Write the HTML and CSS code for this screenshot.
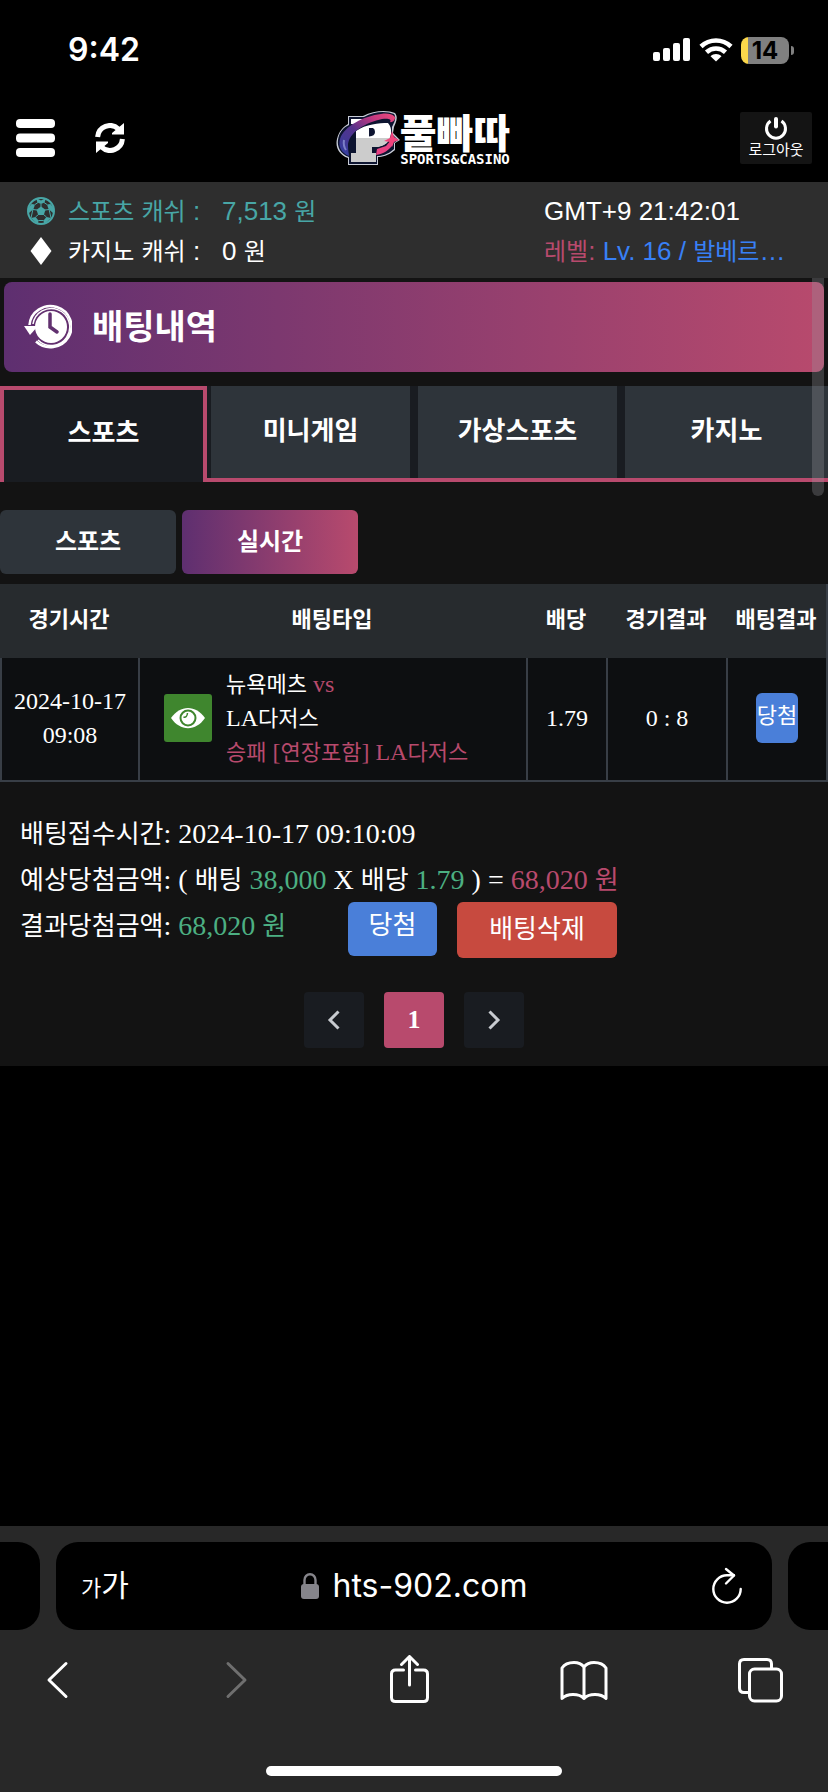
FILE: index.html
```html
<!DOCTYPE html>
<html lang="ko">
<head>
<meta charset="utf-8">
<meta name="viewport" content="width=device-width, initial-scale=1">
<title>배팅내역</title>
<link rel="stylesheet" href="styles.css">
</head>
<body>
<div class="screen">
  <div class="status">
    <time class="clock">9:42</time>
    <div class="status-icons">
      <svg width="38" height="24" viewBox="0 0 38 24" fill="#fff"><rect x="0" y="14" width="7" height="9" rx="2"/><rect x="10" y="10" width="7" height="13" rx="2"/><rect x="20" y="5" width="7" height="18" rx="2"/><rect x="30" y="0" width="7" height="23" rx="2"/></svg>
      <svg width="34" height="24" viewBox="0 0 34 24" fill="none" stroke="#fff" stroke-width="4.600"><path d="M2 8.500C10.500 .5 23.500 .5 32 8.500"/><path d="M7.500 14.200C13 9.200 21 9.200 26.500 14.200"/><path d="M17 23.500L11.500 18.200C14.500 15.400 19.500 15.400 22.500 18.200Z" fill="#fff" stroke="none"/></svg>
      <div class="battery"><span>14</span></div>
    </div>
  </div>

  <header class="header">
    <div class="header-left">
      <button class="icon-btn" aria-label="메뉴"><svg width="39" height="38" viewBox="0 0 39 38" fill="#fff"><rect width="39" height="9" rx="4"/><rect y="14.500" width="39" height="9" rx="4"/><rect y="29" width="39" height="9" rx="4"/></svg></button>
      <button class="icon-btn" aria-label="새로고침"><svg width="30" height="30" viewBox="0 0 30 30"><g fill="none" stroke="#fff" stroke-width="5"><path d="M2.600 14A12.400 12.400 0 0 1 23.500 6"/><path d="M27.400 16A12.400 12.400 0 0 1 6.500 24"/></g><path fill="#fff" d="M29 0V11.500H17V10zM1 30V18.500H13V20z"/></svg></button>
    </div>
    <a class="logo" href="#">
      <svg width="64" height="56" viewBox="0 0 64 56">
        <defs><linearGradient id="ring" x1="0" y1="1" x2="1" y2="0"><stop offset="0" stop-color="#2f3fa0"/><stop offset=".45" stop-color="#55338c"/><stop offset=".75" stop-color="#c43880"/><stop offset="1" stop-color="#f04c7c"/></linearGradient></defs>
        <path fill="#c8ccd6" d="M12 5H27C38-1 52-1 59 2C63 7 59 13 58 16L57 22L64 29L59 32V39C52 45 46 46 42 46V54H12V47C3 44-1 36 1 28C3 20 7 16 12 13Z"/>
        <path fill="#0d1430" d="M13 6H28C38 0 51 0 58 3C61 7 58 12 56 16L56 23L62 29L58 32V38C51 44 46 45 41 45V53H13V46C4 43 1 35 2 29C3 21 8 16 13 14Z"/>
        <path fill="#fff" d="M15 8H27L20 13H15ZM20 20C30 13 43 12 52 12C57 17 56 28 49 33C45 36 40 36 36 36V42H40V51H15V42H20Z"/>
        <path fill="#ccc" d="M20 27H54C53 31 49 34 45 35C42 36 39 36 36 36V42H40V51H15V42H20Z"/>
        <path fill="#0d1430" d="M33 17H37Q39 18 39 21Q39 25 33 25.500Z"/>
        <path fill="url(#ring)" d="M58 5C61 7 57 12 54 11C56 8 52 7 46 8C31 11 12 21 12 35C12 40 13 43 13 45C5 42 2 35 4 28C8 15 28 5 45 3C51 2 56 3 58 5Z"/>
        <path fill="#e84283" d="M40 44C47 43 54 39 57 33L55 29L50 35L41 38Z"/>
        <path fill="#f3437c" d="M56 20L58 26L63 29L58 31L56 36L54 31L48 30L54 27Z"/>
        <path fill="none" stroke="#7c80c8" stroke-width="2" d="M8 29Q7 35 10 39"/>
      </svg>
      <span class="logo-text"><strong>풀빠따</strong><small>SPORTS&amp;CASINO</small></span>
    </a>
    <button class="logout"><svg width="24" height="24" viewBox="0 0 24 24" fill="none" stroke="#fff" stroke-width="3"><path d="M6.500 4A9.500 9.500 0 1 0 17.500 4"/><path stroke-width="4" stroke-linecap="round" d="M12 2V9.500"/></svg><span>로그아웃</span></button>
  </header>

  <section class="info">
    <div class="cash teal">
      <svg width="30" height="30" viewBox="0 0 30 30"><circle cx="15" cy="15" r="13" fill="none" stroke="#48a6a6" stroke-width="2"/><g fill="#48a6a6"><path d="M15 10.500L19.500 13.800L17.800 19H12.200L10.500 13.800Z"/><path d="M10 2L15 4.500L20 2L18.500 6.500L15 8L11.500 6.500Z"/><path d="M1.500 13L5.500 8L9 8.500L7.500 13L3 17Z"/><path d="M28.500 13L24.500 8L21 8.500L22.500 13L27 17Z"/><path d="M5 22L9.500 21L12.500 24.500L12 28.500Z"/><path d="M25 22L20.500 21L17.500 24.500L18 28.500Z"/></g><path fill="none" stroke="#48a6a6" d="M15 8V11M7 13.500L11 14M23 13.500L19 14M9.500 21L12.500 18.500M20.500 21L17.500 18.500M9 8.500L12 6.500M21 8.500L18 6.500M12.500 24.500H17.500M7 13L5 22M23 13L25 22"/></svg>
      <span class="cash-name"><span class="unit">스포츠</span> <span class="unit">캐쉬</span> :</span><span class="value">7,513 <span class="unit">원</span></span>
    </div>
    <div class="clock-zone">GMT+9 21:42:01</div>
    <div class="cash">
      <svg width="30" height="30" viewBox="0 0 30 30"><path fill="#fff" d="M15 1L25.500 15L15 29L4.500 15Z"/></svg>
      <span class="cash-name"><span class="unit">카지노</span> <span class="unit">캐쉬</span> :</span><span class="value">0 <span class="unit">원</span></span>
    </div>
    <div class="level"><span class="pink"><span class="unit">레벨</span>:</span> Lv. 16 / <span class="unit">발베르</span>…</div>
  </section>

  <main class="main">
    <div class="scrollbar"></div>
    <h1 class="title">
      <svg width="48" height="46" viewBox="0 0 48 46"><circle cx="27" cy="23" r="16" fill="#fff"/><path fill="none" stroke="#fff" stroke-width="2.500" d="M5.500 21A21 20.500 0 1 1 12 37.500"/><path fill="none" stroke="#fff" stroke-width="1.500" d="M9 20A18.500 18.500 0 1 1 14 36"/><path fill="#fff" d="M0 22H14L6 31Z"/><path fill="none" stroke="#61306f" stroke-width="3.500" stroke-linecap="round" d="M26 10V23L33 28"/></svg>
      배팅내역
    </h1>

    <nav class="tabs">
      <button class="tab active">스포츠</button>
      <button class="tab">미니게임</button>
      <button class="tab">가상스포츠</button>
      <button class="tab last">카지노</button>
    </nav>

    <div class="subtabs">
      <button class="subtab">스포츠</button>
      <button class="subtab active">실시간</button>
    </div>

    <table class="bets">
      <colgroup><col class="c-time"><col><col class="c-odds"><col class="c-score"><col class="c-result"></colgroup>
      <thead><tr><th>경기시간</th><th>배팅타입</th><th>배당</th><th>경기결과</th><th>배팅결과</th></tr></thead>
      <tbody><tr>
        <td>2024-10-17<br>09:08</td>
        <td><div class="bet">
          <button class="eye" aria-label="보기"><svg width="34" height="22" viewBox="0 0 34 22"><path fill="#fff" d="M0 11C9-2.500 25-2.500 34 11C25 24.500 9 24.500 0 11Z"/><circle cx="17" cy="11" r="7.500" fill="#fff" stroke="#3f862e" stroke-width="2"/><path fill="none" stroke="#3f862e" stroke-width="1.500" d="M12.500 10Q16 11 16.500 6"/></svg></button>
          <div><span class="ko">뉴욕메츠</span> <span class="pink">vs</span><br>LA<span class="ko">다저스</span><br><span class="pink"><span class="ko">승패</span> [<span class="ko">연장포함</span>] LA<span class="ko">다저스</span></span></div>
        </div></td>
        <td>1.79</td>
        <td>0 : 8</td>
        <td><span class="win-badge">당첨</span></td>
      </tr></tbody>
    </table>

    <section class="details">
      <p><span class="label">배팅접수시간</span>: 2024-10-17 09:10:09</p>
      <p><span class="label">예상당첨금액</span>: ( <span class="label">배팅</span> <span class="green">38,000</span> X <span class="label">배당</span> <span class="green">1.79</span> ) = <span class="pink">68,020 <span class="label">원</span></span></p>
      <div class="result">
        <p class="payout"><span class="label">결과당첨금액</span>: <span class="green">68,020 <span class="label">원</span></span></p>
        <span class="win">당첨</span>
        <button class="delete">배팅삭제</button>
      </div>
    </section>

    <nav class="pager">
      <button aria-label="이전"><svg width="14" height="20" viewBox="0 0 14 20"><path d="M11.500 1.500L3 10L11.500 18.500"/></svg></button>
      <button class="current">1</button>
      <button aria-label="다음"><svg width="14" height="20" viewBox="0 0 14 20"><path d="M2.500 1.500L11 10L2.500 18.500"/></svg></button>
    </nav>
  </main>

  <footer class="browser">
    <div class="address-row">
      <div class="side left"></div>
      <div class="address">
        <button class="text-size" aria-label="텍스트 크기"><span class="small">가</span><span class="big">가</span></button>
        <div class="domain"><svg width="18" height="26" viewBox="0 0 18 26"><rect y="11" width="18" height="15" rx="3" fill="#86858b"/><path fill="none" stroke="#86858b" stroke-width="2.400" d="M3.500 12V7A5.500 5.800 0 0 1 14.500 7V12"/></svg><span>hts-902.com</span></div>
        <button class="reload" aria-label="새로고침"><svg width="32" height="38" viewBox="0 0 32 38" fill="none" stroke="#fff" stroke-width="2.400" stroke-linecap="round" stroke-linejoin="round"><path d="M23 8.300H16A13.700 13.700 0 1 0 29.700 22"/><path d="M15 2L23 8.500L15 16.500"/></svg></button>
      </div>
      <div class="side right"></div>
    </div>
    <nav class="toolbar">
      <button aria-label="뒤로"><svg width="48" height="50" viewBox="0 0 48 50"><path d="M33 8.500L16 25L33 41.500"/></svg></button>
      <button aria-label="앞으로" disabled><svg width="48" height="50" viewBox="0 0 48 50"><path d="M19 8.500L36 25L19 41.500"/></svg></button>
      <button aria-label="공유"><svg width="48" height="50" viewBox="0 0 48 50"><path d="M18.500 15H10.500Q6.500 15 6.500 19V42.500Q6.500 46.500 10.500 46.500H38.500Q42.500 46.500 42.500 42.500V19Q42.500 15 38.500 15H30.500M24.500 30V2M16.500 9.500L24.500 1.500L32.500 9.500"/></svg></button>
      <button aria-label="책갈피"><svg width="48" height="50" viewBox="0 0 48 50"><path d="M24 12Q20.500 7.500 14 7.500Q5.500 7.500 2 13V43.500Q6 39.500 13 39.500Q20.500 39.500 24 43.500Q27.500 39.500 35 39.500Q42 39.500 46 43.500V13Q42.500 7.500 34 7.500Q27.500 7.500 24 12ZM24 12V43.500"/></svg></button>
      <button aria-label="탭"><svg width="48" height="50" viewBox="0 0 48 50"><rect x="13.500" y="14" width="32" height="32" rx="5"/><path d="M13.500 37.500H8Q3.500 37.500 3.500 33V9Q3.500 4.500 8 4.500H31Q35.500 4.500 35.500 9V13.500"/></svg></button>
    </nav>
    <div class="home"></div>
  </footer>
</div>
</body>
</html>
```
FILE: styles.css
```css
* { box-sizing: border-box; }
body { margin: 0; background: #000; color: #fff; font-family: "Liberation Sans", "Noto Sans CJK KR", sans-serif; }
button { margin: 0; padding: 0; border: 0; background: none; color: inherit; font: inherit; cursor: pointer; }
p, h1 { margin: 0; }
svg { display: block; flex: none; }
.screen { display: flex; flex-direction: column; min-height: 100vh; }
.pink { color: #b84a6d; }
.green { color: #4caf82; }

.status { display: flex; justify-content: space-between; align-items: center; height: 100px; padding: 0 34px 0 68px; font-family: Inter, sans-serif; }
.clock { font-size: 32px; font-weight: 600; line-height: 40px; }
.status-icons { display: flex; align-items: center; gap: 8px; }
.battery { position: relative; width: 48px; height: 27px; margin-right: 5px; border-radius: 8px; background: linear-gradient(90deg, #fbd74b 7px, #808080 7px); color: #000; font-size: 24px; font-weight: 700; line-height: 27px; text-align: center; }
.battery::after { content: ""; position: absolute; left: 50px; top: 9px; width: 3px; height: 9px; border-radius: 0 4px 4px 0; background: #808080; }

.header { display: grid; grid-template-columns: 1fr auto 1fr; align-items: center; height: 82px; padding: 0 16px 6px; }
.header-left { display: flex; align-items: center; gap: 40px; }
.logo { display: flex; align-items: center; padding: 2px 0 0 18px; color: #fff; text-decoration: none; }
.logo-text { display: flex; flex-direction: column; align-items: center; font-family: "Noto Sans CJK KR", sans-serif; }
.logo-text strong { font-size: 40px; font-weight: 900; line-height: 38px; }
.logo-text small { margin-top: 2px; font-family: "DejaVu Sans Mono", monospace; font-size: 14px; font-weight: 700; line-height: 14px; }
.logout { justify-self: end; display: flex; flex-direction: column; align-items: center; justify-content: center; width: 72px; height: 52px; border-radius: 2px; background: #141414; font-size: 15px; line-height: 18px; }

.info { display: grid; grid-template-columns: 1fr 284px; grid-auto-rows: 40px; align-items: center; height: 96px; padding: 9px 0 7px; background: #2e2e2e; font-size: 26px; line-height: 40px; white-space: nowrap; }
.cash { display: flex; align-items: center; padding-left: 26px; }
.teal { color: #48a6a6; }
.cash-name { width: 154px; margin-left: 12px; }
.unit { font-size: 24px; line-height: 0; }
.level { color: #3880f6; }

.main { position: relative; padding-top: 4px; background: #131313; }
.scrollbar { position: absolute; z-index: 1; top: 0; right: 4px; width: 12px; height: 218px; border-radius: 0 0 6px 6px; background: rgba(152, 152, 160, .3); }
.title { display: flex; align-items: center; gap: 20px; height: 90px; margin: 0 4px; padding-left: 20px; border-radius: 8px; background: linear-gradient(90deg, #5e2f70, #b84a6d); font-size: 34px; font-weight: 700; line-height: 46px; }

.tabs { display: grid; grid-template-columns: repeat(4, 1fr); height: 96px; margin-top: 14px; background: linear-gradient(0deg, #b84a6d 4px, #191c21 4px); }
.tab { margin: 0 4px 4px; padding-bottom: 8px; background: #2e343a; font-size: 26px; font-weight: 700; }
.tab.last { margin-right: 0; }
.tab.active { margin: 0; padding-bottom: 12px; border: 4px solid #b84a6d; border-bottom: 0; background: #191c21; }

.subtabs { display: flex; gap: 6px; margin-top: 28px; }
.subtab { width: 176px; height: 64px; padding-bottom: 6px; border-radius: 6px; background: #2e343a; font-size: 24px; font-weight: 700; }
.subtab.active { background: linear-gradient(90deg, #5e2f70, #b84a6d); }

.bets { width: 100%; margin-top: 10px; table-layout: fixed; border-spacing: 0; border-right: 2px solid #383e46; background: #0d0f11; font-family: "Liberation Serif", "Noto Sans CJK KR", serif; font-size: 24px; line-height: 34px; text-align: center; }
.c-time { width: 138px; }
.c-odds { width: 80px; }
.c-score { width: 120px; }
.c-result { width: 100px; }
.bets th { height: 74px; padding: 0 0 2px; background: #272b2e; font-size: 22px; font-weight: 700; }
.bets td { height: 124px; padding: 0 0 2px; border-left: 2px solid #383e46; border-bottom: 2px solid #383e46; }
.ko { font-size: 22px; line-height: 0; }
.bet { display: flex; align-items: center; gap: 14px; padding-left: 24px; text-align: left; white-space: nowrap; }
.eye { display: grid; place-items: center; width: 48px; height: 48px; border-radius: 3px; background: #3f862e; }
.win-badge { display: inline-block; width: 42px; height: 50px; border-radius: 6px; background: #4a7fd9; font-size: 22px; line-height: 46px; vertical-align: middle; }

.details { padding: 28px 20px 0; font-family: "Liberation Serif", "Noto Sans CJK KR", serif; font-size: 28px; line-height: 48px; white-space: nowrap; }
.details p { height: 46px; }
.label { font-size: 26px; line-height: 0; }
.result { display: flex; gap: 20px; height: 56px; }
.payout { width: 308px; }
.win, .delete { height: 54px; border-radius: 6px; background: #4a7fd9; font-size: 26px; text-align: center; }
.win { width: 89px; }
.delete { width: 160px; height: 56px; background: #c74a3f; }

.pager { display: flex; justify-content: center; gap: 20px; padding: 34px 0 18px; }
.pager button { display: grid; place-items: center; width: 60px; height: 56px; border-radius: 4px; background: #191c21; font-family: "Liberation Serif", serif; font-size: 26px; font-weight: 700; }
.pager .current { background: #b84a6d; }
.pager path { fill: none; stroke: #c8cbd0; stroke-width: 3; }

.browser { display: flex; flex-direction: column; height: 266px; margin-top: auto; padding-top: 16px; background: #282828; }
.address-row { display: flex; gap: 16px; height: 88px; }
.side { width: 40px; background: #000; }
.left { border-radius: 0 22px 22px 0; }
.right { border-radius: 22px 0 0 22px; }
.address { flex: 1; display: grid; grid-template-columns: 1fr auto 1fr; align-items: center; padding: 0 29px 0 25px; border-radius: 22px; background: #000; }
.text-size { justify-self: start; font-family: "Noto Sans CJK KR", sans-serif; line-height: 40px; }
.small { font-size: 22px; }
.big { font-size: 30px; }
.domain { display: flex; align-items: center; gap: 14px; padding-left: 4px; font-family: Inter, sans-serif; font-size: 32px; line-height: 40px; }
.reload { justify-self: end; }
.toolbar { display: flex; justify-content: space-between; padding: 25px 44px 0 33px; }
.toolbar path, .toolbar rect { fill: none; stroke: #fff; stroke-width: 3; stroke-linecap: round; stroke-linejoin: round; }
.toolbar button:disabled path { stroke: #6f6f6f; }
.home { width: 296px; height: 10px; margin: auto auto 16px; border-radius: 5px; background: #fff; }
```
